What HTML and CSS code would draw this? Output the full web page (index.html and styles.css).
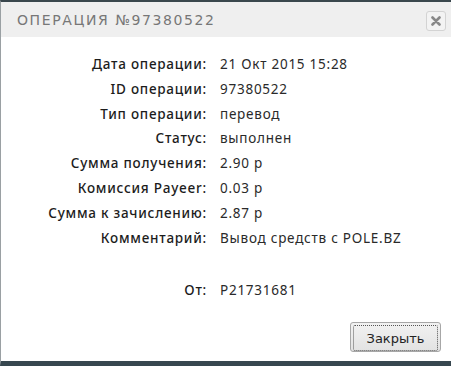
FILE: index.html
```html
<!DOCTYPE html>
<html lang="ru">
<head>
  <meta charset="UTF-8">
  <title>Операция</title>
  <link rel="stylesheet" href="styles.css">
</head>
<body>
<div class="dialog">
  <div class="dialog-head">
    <span class="dialog-title">Операция №97380522</span>
    <button class="close-btn" type="button" aria-label="Закрыть">
      <svg width="10" height="10" viewBox="0 0 10 10"><path d="M1.5 1.5 L8.5 8.5 M8.5 1.5 L1.5 8.5" stroke="#888" stroke-width="2.6" stroke-linecap="round"/></svg>
    </button>
  </div>
  <div class="dialog-body">
    <div class="info">
      <div class="lbl">Дата операции:</div><div class="val">21 Окт 2015 15:28</div>
      <div class="lbl">ID операции:</div><div class="val">97380522</div>
      <div class="lbl">Тип операции:</div><div class="val">перевод</div>
      <div class="lbl">Статус:</div><div class="val">выполнен</div>
      <div class="lbl">Сумма получения:</div><div class="val">2.90 р</div>
      <div class="lbl">Комиссия Payeer:</div><div class="val">0.03 р</div>
      <div class="lbl">Сумма к зачислению:</div><div class="val">2.87 р</div>
      <div class="lbl">Комментарий:</div><div class="val">Вывод средств с POLE.BZ</div>
      <div class="lbl spacer"></div><div class="val spacer"></div>
      <div class="lbl">От:</div><div class="val">P21731681</div>
    </div>
  </div>
  <div class="dialog-foot">
    <button class="btn" type="button"><span>Закрыть</span></button>
  </div>
</div>
</body>
</html>
```

FILE: styles.css
```css
html, body {
  margin: 0;
  height: 100%;
}
body {
  background: #fff;
  font-family: "Noto Sans", sans-serif;
  overflow: hidden;
}
.dialog {
  height: 366px;
  box-sizing: border-box;
  border-top: 2px solid #3a474d;
  border-left: 1px solid #9aa0a3;
  border-bottom: 5px solid #37474f;
  display: flex;
  flex-direction: column;
}
.dialog-head {
  background: #efefef;
  height: 35px;
  display: flex;
  align-items: center;
  justify-content: space-between;
  padding: 0 5px 0 16px;
}
.dialog-title {
  font-family: "DejaVu Sans", sans-serif;
  font-size: 14px;
  text-transform: uppercase;
  letter-spacing: 1.6px;
  color: #777;
  margin-top: 1px;
}
.close-btn {
  width: 20px;
  height: 20px;
  padding: 0;
  border: 1px solid #d3d3d3;
  border-radius: 3px;
  background: #f3f3f3;
  display: flex;
  align-items: center;
  justify-content: center;
  margin-top: 2px;
}
.dialog-body {
  flex: 1;
  padding-top: 15px;
}
.info {
  display: grid;
  grid-template-columns: 206px auto;
  column-gap: 13px;
  font-size: 13.5px;
  letter-spacing: 0.75px;
  color: #222;
  line-height: 24.8px;
}
.lbl {
  text-align: right;
  font-weight: 500;
  color: #1c1c1c;
}
.val {
  color: #2a2a2a;
}
.spacer {
  height: 28px;
}
.dialog-foot {
  display: flex;
  justify-content: flex-end;
  padding: 0 10px 9px 0;
}
.btn {
  width: 91px;
  height: 30px;
  padding: 2px;
  border: 1px solid #a7a7a7;
  border-radius: 3px;
  background: linear-gradient(#f2f2f2, #e2e2e2);
  font-family: "DejaVu Sans", sans-serif;
  font-size: 13px;
  color: #222;
}
.btn span {
  display: flex;
  align-items: center;
  justify-content: center;
  height: 100%;
  border: 1px dotted #555;
  border-radius: 2px;
}
```
